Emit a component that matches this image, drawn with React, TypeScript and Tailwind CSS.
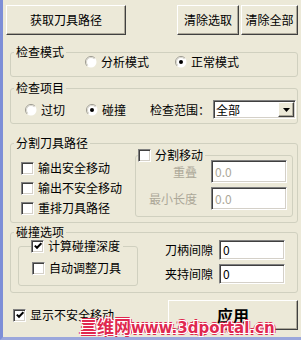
import React from 'react';

const sunken =
  'border border-t-[#808080] border-l-[#808080] border-r-white border-b-white shadow-[inset_1px_1px_0_#404040,inset_-1px_-1px_0_#d4d0c8]';
const raised =
  'border border-t-white border-l-white border-r-[#404040] border-b-[#404040] shadow-[inset_-1px_-1px_0_#aca899]';

const Btn = ({ className = '', children }: { className?: string; children: React.ReactNode }) => (
  <button className={`flex items-center justify-center bg-[#ece9d8] ${raised} ${className}`}>{children}</button>
);

const Radio = ({ checked = false, label, className = '' }: { checked?: boolean; label: string; className?: string }) => (
  <span className={`flex items-center gap-[4px] ${className}`}>
    <svg width="12" height="12" viewBox="0 0 12 12" className="shrink-0">
      <circle cx="6" cy="6" r="5.5" fill="#fff" />
      <path d="M9.9 2.1 A5.5 5.5 0 0 0 2.1 9.9" stroke="#9c9a90" fill="none" />
      <path d="M9.2 2.8 A4.5 4.5 0 0 0 2.8 9.2" stroke="#d8d6cc" fill="none" />
      {checked && <circle cx="6" cy="6" r="2" fill="#000" />}
    </svg>
    <span>{label}</span>
  </span>
);

const Check = ({ checked = false }: { checked?: boolean }) => (
  <span className={`w-[13px] h-[13px] shrink-0 bg-white flex items-center justify-center ${sunken}`}>
    {checked && (
      <svg width="8" height="8" viewBox="0 0 8 8">
        <path d="M0.8 3.6 L3 5.8 L7.4 1.2" stroke="#000" strokeWidth="2" fill="none" />
      </svg>
    )}
  </span>
);

const Field = ({ value, disabled = false, className = '' }: { value: string; disabled?: boolean; className?: string }) => (
  <div className={`bg-white flex items-center pl-[3px] ${sunken} ${disabled ? 'text-[#aca899]' : 'text-black'} ${className}`}>
    {value}
  </div>
);

export default function App() {
  return (
    <div className="relative w-[301px] h-[340px] bg-[#ece9d8] border-l-[3px] border-b-[3px] border-l-[#7d8ed7] border-b-[#9ba7dc] pr-[3px] flex flex-col font-['Noto_Sans_CJK_SC',sans-serif] text-[12px] leading-[14px] text-black overflow-hidden">
      {/* top buttons */}
      <div className="flex mt-[5px] ml-[3px] h-[30px]">
        <Btn className="w-[120px]">获取刀具路径</Btn>
        <Btn className="w-[62px] ml-auto">清除选取</Btn>
        <Btn className="w-[57px] ml-[2px]">清除全部</Btn>
      </div>

      {/* 检查模式 */}
      <fieldset className="ml-[7px] mt-[11px] border border-[#d0d0bf] rounded-[3px] pb-[8px]">
        <legend className="ml-[3px] px-[2px] leading-[12px]">检查模式</legend>
        <div className="flex items-center h-[12px] -mt-[2px] pl-[74px]">
          <Radio label="分析模式" />
          <Radio label="正常模式" checked className="ml-[26px]" />
        </div>
      </fieldset>

      {/* 检查项目 */}
      <fieldset className="ml-[7px] mt-[5px] border border-[#d0d0bf] rounded-[3px] pb-[4px]">
        <legend className="ml-[3px] px-[2px] leading-[12px]">检查项目</legend>
        <div className="flex items-center h-[19px] mt-[6px] pl-[14px]">
          <Radio label="过切" />
          <Radio label="碰撞" checked className="ml-[21px]" />
          <span className="ml-[24px]">检查范围：</span>
          <div className={`ml-[3px] w-[83px] h-[19px] bg-white p-[1px] flex items-center ${sunken}`}>
            <span className="flex-1 pl-[1px]">全部</span>
            <span className={`w-[16px] h-[15px] bg-[#ece9d8] flex items-center justify-center ${raised}`}>
              <svg width="7" height="4" viewBox="0 0 7 4">
                <path d="M0 0 H7 L3.5 4 Z" fill="#000" />
              </svg>
            </span>
          </div>
        </div>
      </fieldset>

      {/* 分割刀具路径 */}
      <fieldset className="ml-[7px] mt-[13px] border border-[#d0d0bf] rounded-[3px] pb-[4px]">
        <legend className="ml-[3px] px-[2px] leading-[12px]">分割刀具路径</legend>
        <div className="flex items-start">
          <div className="w-[124px] pl-[10px] mt-[9px] flex flex-col">
            {['输出安全移动', '输出不安全移动', '重排刀具路径'].map((t) => (
              <div key={t} className="h-[20px] flex items-center gap-[4px]">
                <Check />
                <span>{t}</span>
              </div>
            ))}
          </div>
          <fieldset className="flex-1 mr-[4px] -mt-[1px] border border-[#d0d0bf] rounded-[3px] pb-[6px]">
            <legend className="ml-[2px] h-[14px] flex items-center gap-[4px] pr-[2px]">
              <Check />
              <span>分割移动</span>
            </legend>
            <div className="grid grid-cols-[61px_76px] gap-x-[14px] gap-y-[4px] -mt-[2px] items-center">
              <span className="text-right text-[#aca899]">重叠</span>
              <Field value="0.0" disabled className="h-[23px]" />
              <span className="text-right text-[#aca899]">最小长度</span>
              <Field value="0.0" disabled className="h-[23px]" />
            </div>
          </fieldset>
        </div>
      </fieldset>

      {/* 碰撞选项 */}
      <fieldset className="ml-[7px] mt-[3px] border border-[#d0d0bf] rounded-[3px] pb-[6px]">
        <legend className="ml-[3px] px-[2px] leading-[12px]">碰撞选项</legend>
        <div className="flex items-start">
          <fieldset className="ml-[7px] w-[120px] mt-[1px] border border-[#d0d0bf] rounded-[3px] pb-[10px]">
            <legend className="ml-[12px] h-[14px] flex items-center gap-[4px] pr-[3px]">
              <Check checked />
              <span>计算碰撞深度</span>
            </legend>
            <div className="mt-[8px] h-[14px] flex items-center gap-[4px] pl-[13px]">
              <Check />
              <span>自动调整刀具</span>
            </div>
          </fieldset>
          <div className="ml-[27px] mt-[2px] grid grid-cols-[48px_66px] gap-x-[6px] gap-y-[4px] items-center">
            <span>刀柄间隙</span>
            <Field value="0" className="h-[20px]" />
            <span>夹持间隙</span>
            <Field value="0" className="h-[20px]" />
          </div>
        </div>
      </fieldset>

      {/* bottom row */}
      <div className="mt-[7px] flex items-center h-[30px] pl-[10px]">
        <Check checked />
        <span className="ml-[4px]">显示不安全移动</span>
        <Btn className="ml-auto w-[130px] h-[30px] text-[16px] font-bold">应用</Btn>
      </div>

      {/* watermark */}
      <div className="absolute left-[77px] top-[317px] leading-[18px] whitespace-nowrap font-bold text-[#e0284f] [text-shadow:1px_0_#fff,-1px_0_#fff,0_1px_#fff,0_-1px_#fff,1px_1px_#fff,-1px_-1px_#fff,1px_-1px_#fff,-1px_1px_#fff,2px_0_#e0284f,-2px_0_#e0284f,0_2px_#e0284f,0_-2px_#e0284f]">
        <span className="text-[17px]">三维网</span>
        <span className="text-[15px] font-['DejaVu_Sans',sans-serif]">www.3dportal.cn</span>
      </div>
    </div>
  );
}
